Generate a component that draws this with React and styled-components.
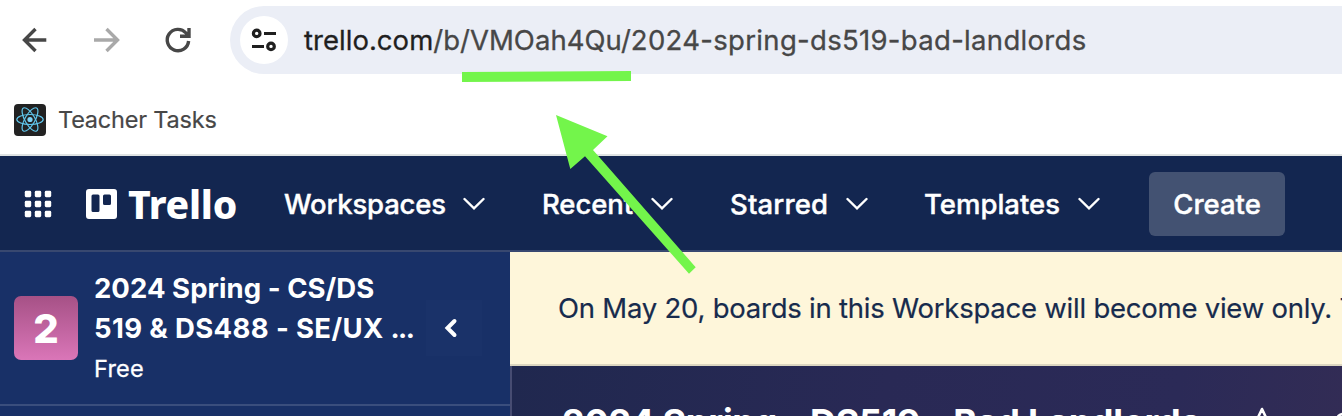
import React from "react";
import styled, { createGlobalStyle } from "styled-components";

const Global = createGlobalStyle`
  * { box-sizing: border-box; }
  body { margin: 0; overflow: hidden; background: #fff; }
  svg { display: block; flex: none; }
`;

const Page = styled.div`
  position: relative;
  display: flex;
  flex-direction: column;
  width: 1342px;
  height: 416px;
  overflow: hidden;
  font-family: Inter, "Liberation Sans", sans-serif;
  white-space: nowrap;
`;

const Label = styled.span`
  letter-spacing: ${(p) => p.$track || 0}px;
`;

const Toolbar = styled.div`
  display: flex;
  align-items: center;
  height: 80px;
  flex: none;
  padding-left: 18px;
`;

const NavIcons = styled.div`
  display: flex;
  gap: 40px;
  width: 212px;
`;

const AddressBar = styled.div`
  display: flex;
  align-items: center;
  flex: 1;
  height: 68px;
  padding-left: 10px;
  border-radius: 34px 0 0 34px;
  background: #ebeef6;
  color: #474747;
  font-size: 27.5px;
  -webkit-text-stroke: 0.3px;
`;

const SiteInfo = styled.div`
  display: flex;
  align-items: center;
  justify-content: center;
  width: 48px;
  height: 48px;
  margin-right: 16px;
  border-radius: 50%;
  background: #fff;
`;

const Host = styled.span`
  color: #1f1f1f;
`;

const Bookmarks = styled.div`
  display: flex;
  align-items: center;
  gap: 12px;
  flex: none;
  height: 76px;
  padding: 6px 0 0 14px;
  border-bottom: 2px solid #dfe3e3;
  color: #474747;
  font-size: 23.5px;
`;

const BookmarkName = styled(Label)`
  padding-bottom: 2px;
  -webkit-text-stroke: 0.2px;
`;

const Header = styled.header`
  display: flex;
  align-items: center;
  flex: none;
  height: 96px;
  padding: 2px 0 0 24px;
  border-bottom: 2px solid #384870;
  background: #132650;
  color: #fff;
`;

const Brand = styled.div`
  display: flex;
  align-items: center;
  gap: 11px;
  width: 198px;
  margin-left: 34px;
`;

const Wordmark = styled.span`
  font-family: "Noto Sans", sans-serif;
  font-size: 39px;
  font-weight: 800;
  line-height: 40px;
  letter-spacing: -0.2px;
`;

const MenuItem = styled.div`
  display: flex;
  align-items: center;
  justify-content: space-between;
  width: ${(p) => p.$width}px;
  margin-right: ${(p) => p.$after}px;
  font-size: 27.5px;
  font-weight: 500;
  -webkit-text-stroke: 0.4px;
`;

const CreateButton = styled.button`
  width: 136px;
  height: 64px;
  padding: 0;
  border: 0;
  border-radius: 6px;
  background: #435272;
  color: #fff;
  font: 500 27.5px Inter, sans-serif;
  -webkit-text-stroke: 0.4px;
`;

const Body = styled.div`
  display: flex;
  flex: 1;
  min-height: 0;
`;

const Sidebar = styled.aside`
  width: 510px;
  flex: none;
  background: #183067;
  color: #fff;
`;

const Workspace = styled.div`
  display: flex;
  align-items: center;
  height: 154px;
  padding-left: 14px;
  border-bottom: 2px solid #3a4e7d;
`;

const Avatar = styled.div`
  display: flex;
  align-items: center;
  justify-content: center;
  width: 64px;
  height: 64px;
  border-radius: 7px;
  background: linear-gradient(#a65186, #da76b8);
  font-size: 40px;
  font-weight: 800;
`;

const WorkspaceText = styled.div`
  display: flex;
  flex-direction: column;
  width: 332px;
  margin-left: 16px;
`;

const WorkspaceName = styled.div`
  font-size: 27.5px;
  font-weight: 650;
  line-height: 40px;
`;

const Plan = styled.div`
  font-size: 23.5px;
  line-height: 40px;
  padding-top: 1px;
  margin-bottom: -1px;
  -webkit-text-stroke: 0.3px;
`;

const Collapse = styled.div`
  display: flex;
  align-items: center;
  justify-content: center;
  width: 56px;
  height: 56px;
  padding-right: 6px;
  background: #1a3269;
`;

const Main = styled.main`
  display: flex;
  flex-direction: column;
  flex: 1;
  min-width: 0;
`;

const Notice = styled.div`
  display: flex;
  align-items: center;
  height: 114px;
  flex: none;
  padding-left: 48px;
  border-bottom: 2px solid #dcd6c0;
  background: #fef6da;
  color: #172b4d;
  font-size: 27.5px;
  -webkit-text-stroke: 0.2px;
`;

const BoardHeader = styled.div`
  display: flex;
  flex: 1;
  min-height: 0;
  padding: 34px 0 0 50px;
  border-left: 2px solid #474c72;
  background: linear-gradient(100deg, #20284f 0%, #292955 45%, #2b2a57 80%, #322c55 100%);
  color: #fff;
`;

const BoardTitle = styled.div`
  width: 684px;
  flex: none;
  font-size: 36px;
  font-weight: 750;
  line-height: 44px;
`;

const BoardActions = styled.div`
  display: flex;
  gap: 54px;
  padding-top: 6px;
`;

const Annotation = styled.svg`
  position: absolute;
  inset: 0;
`;

const Arrow = ({ forward }) => (
  <svg width="32" height="32" viewBox="0 0 32 32" fill="none" stroke={forward ? "#a9a9a9" : "#474747"} strokeWidth="3.4">
    <path d={forward ? "M4 16H28M16.500 5L27.500 16L16.500 27" : "M28.300 16H6M17.500 5L6.500 16L17.500 27"} />
  </svg>
);

const Reload = () => (
  <svg width="32" height="32" viewBox="0 0 32 32" fill="none" stroke="#474747" strokeWidth="3.4">
    <path d="M26.600 17A10.700 10.700 0 1 1 24 9L26.500 12M27 4V12.300H18" />
  </svg>
);

const Tune = () => (
  <svg width="26" height="26" viewBox="0 0 26 26" fill="none" stroke="#1f1f1f" strokeWidth="3.2">
    <circle cx="5.7" cy="6.4" r="3.3" />
    <path d="M13 6.500H25M1 19.500H13" />
    <circle cx="20" cy="19.400" r="3.300" />
  </svg>
);

const ReactLogo = () => (
  <svg width="32" height="32" viewBox="0 0 32 32">
    <rect width="32" height="32" rx="4" fill="#222" />
    <g fill="none" stroke="#61c8ee" strokeWidth="1.2" transform="translate(16 15.5)">
      <ellipse rx="13.2" ry="5" />
      <ellipse rx="13.2" ry="5" transform="rotate(60)" />
      <ellipse rx="13.2" ry="5" transform="rotate(120)" />
      <circle r="2.6" fill="#7bd3f7" stroke="none" />
    </g>
  </svg>
);

const Apps = () => (
  <svg width="28" height="28" viewBox="0 0 28 28" fill="#fff">
    {[0.8, 10.8, 20.8].map((y) =>
      [0.8, 10.8, 20.8].map((x) => <rect key={x + "-" + y} x={x} y={y} width="6.4" height="6.4" rx="1.4" />)
    )}
  </svg>
);

const TrelloMark = () => (
  <svg width="31" height="30" viewBox="0 0 31 30">
    <path
      fill="#fff"
      fillRule="evenodd"
      d="M3 0H28a3 3 0 0 1 3 3V27a3 3 0 0 1-3 3H3a3 3 0 0 1-3-3V3a3 3 0 0 1 3-3ZM7 5.5a1.5 1.5 0 0 0-1.5 1.5V21.500a1.500 1.500 0 0 0 1.500 1.500H12a1.500 1.500 0 0 0 1.500-1.500V7A1.500 1.500 0 0 0 12 5.500ZM18.500 5.500A1.500 1.500 0 0 0 17 7V14.500a1.500 1.500 0 0 0 1.500 1.500H23.500a1.500 1.500 0 0 0 1.500-1.500V7a1.500 1.500 0 0 0-1.500-1.500Z"
    />
  </svg>
);

const Chevron = () => (
  <svg width="22" height="14" viewBox="0 0 22 14" fill="none" stroke="#fff" strokeWidth="2.4" strokeLinecap="round">
    <path d="M1.5 2L11 11.4L20.500 2" />
  </svg>
);

const ChevronLeft = () => (
  <svg width="14" height="20" viewBox="0 0 14 20" fill="none" stroke="#fff" strokeWidth="4" strokeLinecap="round">
    <path d="M10.500 3L3.500 10L10.500 17" />
  </svg>
);

const Star = () => (
  <svg width="32" height="32" viewBox="0 0 32 32" fill="none" stroke="#fff" strokeWidth="2.6" strokeLinejoin="round">
    <path d="M16 3L20 11.500L29 12.500L22.400 18.700L24 28L16 23.500L8 28L9.600 18.700L3 12.500L12 11.500Z" />
  </svg>
);

const People = () => (
  <svg width="32" height="32" viewBox="0 0 32 32" fill="none" stroke="#fff" strokeWidth="2.6">
    <circle cx="11" cy="14" r="6" />
    <path d="M2 31V28a5 5 0 0 1 5-5H15a5 5 0 0 1 5 5V31" />
  </svg>
);

const menus = [
  { text: "Workspaces", width: 201, after: 57, track: -0.2 },
  { text: "Recent", width: 131, after: 57, track: -0.1 },
  { text: "Starred", width: 138, after: 56, track: 0.15 },
  { text: "Templates", width: 176, after: 49, track: 0 },
];

export default function App() {
  return (
    <Page>
      <Global />
      <Toolbar>
        <NavIcons>
          <Arrow />
          <Arrow forward />
          <Reload />
        </NavIcons>
        <AddressBar>
          <SiteInfo><Tune /></SiteInfo>
          <Label $track={0.03}><Host>trello.com</Host>/b/VMOah4Qu/</Label>
          <Label $track={0.31}>2024-spring-ds519-bad-landlords</Label>
        </AddressBar>
      </Toolbar>
      <Bookmarks>
        <ReactLogo />
        <BookmarkName $track={-0.2}>Teacher Tasks</BookmarkName>
      </Bookmarks>
      <Header>
        <Apps />
        <Brand>
          <TrelloMark />
          <Wordmark>Trello</Wordmark>
        </Brand>
        {menus.map((m) => (
          <MenuItem key={m.text} $width={m.width} $after={m.after}>
            <Label $track={m.track}>{m.text}</Label>
            <Chevron />
          </MenuItem>
        ))}
        <CreateButton>Create</CreateButton>
      </Header>
      <Body>
        <Sidebar>
          <Workspace>
            <Avatar>2</Avatar>
            <WorkspaceText>
              <WorkspaceName>
                <Label $track={0.05}>2024 Spring - CS/DS</Label>
                <br />
                <Label $track={0.36}>519 &amp; DS488 - SE/UX </Label>
                <Label $track={-1.6}>...</Label>
              </WorkspaceName>
              <Plan><Label $track={0.2}>Free</Label></Plan>
            </WorkspaceText>
            <Collapse><ChevronLeft /></Collapse>
          </Workspace>
        </Sidebar>
        <Main>
          <Notice>
            <Label $track={-0.23}>On May 20, boards in this Workspace will become view only. T</Label>
          </Notice>
          <BoardHeader>
            <BoardTitle><Label $track={-0.28}>2024 Spring - DS519 - Bad Landlords</Label></BoardTitle>
            <BoardActions>
              <Star />
              <People />
            </BoardActions>
          </BoardHeader>
        </Main>
      </Body>
      <Annotation width="1342" height="416" viewBox="0 0 1342 416" fill="#73f54b">
        <path d="M462 72L631 71V81L462 82Z" />
        <path d="M556 115L607.500 136.300L593 150L695.700 267.300L689 273.700L585 156.200L570.300 169Z" />
      </Annotation>
    </Page>
  );
}
